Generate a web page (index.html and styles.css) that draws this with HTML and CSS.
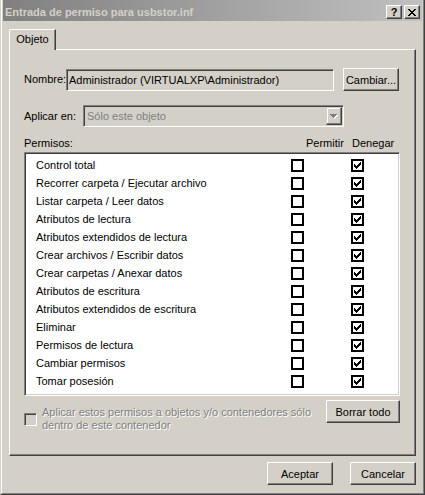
FILE: index.html
```html
<!DOCTYPE html>
<html lang="es">
<head>
<meta charset="utf-8">
<title>Entrada de permiso para usbstor.inf</title>
<link rel="stylesheet" href="styles.css">
</head>
<body>
<div class="window">
  <div class="frame">
    <div class="titlebar">
      <span class="title">Entrada de permiso para usbstor.inf</span>
      <div class="tbtns">
        <span class="tbtn help">?</span>
        <span class="tbtn close">
          <svg width="8" height="7" viewBox="0 0 8 7" shape-rendering="crispEdges"><path fill="#000" d="M0 0h2v1H0z M6 0h2v1H6z M1 1h2v1H1z M5 1h2v1H5z M2 2h4v1H2z M3 3h2v1H3z M2 4h4v1H2z M1 5h2v1H1z M5 5h2v1H5z M0 6h2v1H0z M6 6h2v1H6z"/></svg>
        </span>
      </div>
    </div>
    <div class="content">
      <div class="tabs"><div class="tab">Objeto</div></div>
      <div class="panel">
        <div class="row name-row">
          <span class="lbl lbl-name">Nombre:</span>
          <div class="sunken name-field">Administrador (VIRTUALXP\Administrador)</div>
          <button class="btn cambiar">Cambiar...</button>
        </div>
        <div class="row apply-row">
          <span class="lbl lbl-apply">Aplicar en:</span>
          <div class="sunken combo">
            <span class="combo-text">Sólo este objeto</span>
            <span class="drop">
              <svg width="8" height="5" viewBox="0 0 8 5" shape-rendering="crispEdges"><path fill="#fff" d="M1 1h7v1H1z M2 2h5v1H2z M3 3h3v1H3z M4 4h1v1H4z"/><path fill="#808080" d="M0 0h7v1H0z M1 1h5v1H1z M2 2h3v1H2z M3 3h1v1H3z"/></svg>
            </span>
          </div>
        </div>
        <div class="perm-head">
          <span class="ph-name">Permisos:</span>
          <span class="ph-allow">Permitir</span>
          <span class="ph-deny">Denegar</span>
        </div>
        <div class="sunken list">
          <div class="item"><span class="iname">Control total</span><span class="cb"></span><span class="cb deny"><svg width="7" height="7" viewBox="0 0 7 7" shape-rendering="crispEdges"><path d="M0 2h1v3H0z M1 3h1v3H1z M2 4h1v3H2z M3 3h1v3H3z M4 2h1v3H4z M5 1h1v3H5z M6 0h1v3H6z"/></svg></span></div>
          <div class="item"><span class="iname">Recorrer carpeta / Ejecutar archivo</span><span class="cb"></span><span class="cb deny"><svg width="7" height="7" viewBox="0 0 7 7" shape-rendering="crispEdges"><path d="M0 2h1v3H0z M1 3h1v3H1z M2 4h1v3H2z M3 3h1v3H3z M4 2h1v3H4z M5 1h1v3H5z M6 0h1v3H6z"/></svg></span></div>
          <div class="item"><span class="iname">Listar carpeta / Leer datos</span><span class="cb"></span><span class="cb deny"><svg width="7" height="7" viewBox="0 0 7 7" shape-rendering="crispEdges"><path d="M0 2h1v3H0z M1 3h1v3H1z M2 4h1v3H2z M3 3h1v3H3z M4 2h1v3H4z M5 1h1v3H5z M6 0h1v3H6z"/></svg></span></div>
          <div class="item"><span class="iname">Atributos de lectura</span><span class="cb"></span><span class="cb deny"><svg width="7" height="7" viewBox="0 0 7 7" shape-rendering="crispEdges"><path d="M0 2h1v3H0z M1 3h1v3H1z M2 4h1v3H2z M3 3h1v3H3z M4 2h1v3H4z M5 1h1v3H5z M6 0h1v3H6z"/></svg></span></div>
          <div class="item"><span class="iname">Atributos extendidos de lectura</span><span class="cb"></span><span class="cb deny"><svg width="7" height="7" viewBox="0 0 7 7" shape-rendering="crispEdges"><path d="M0 2h1v3H0z M1 3h1v3H1z M2 4h1v3H2z M3 3h1v3H3z M4 2h1v3H4z M5 1h1v3H5z M6 0h1v3H6z"/></svg></span></div>
          <div class="item"><span class="iname">Crear archivos / Escribir datos</span><span class="cb"></span><span class="cb deny"><svg width="7" height="7" viewBox="0 0 7 7" shape-rendering="crispEdges"><path d="M0 2h1v3H0z M1 3h1v3H1z M2 4h1v3H2z M3 3h1v3H3z M4 2h1v3H4z M5 1h1v3H5z M6 0h1v3H6z"/></svg></span></div>
          <div class="item"><span class="iname">Crear carpetas / Anexar datos</span><span class="cb"></span><span class="cb deny"><svg width="7" height="7" viewBox="0 0 7 7" shape-rendering="crispEdges"><path d="M0 2h1v3H0z M1 3h1v3H1z M2 4h1v3H2z M3 3h1v3H3z M4 2h1v3H4z M5 1h1v3H5z M6 0h1v3H6z"/></svg></span></div>
          <div class="item"><span class="iname">Atributos de escritura</span><span class="cb"></span><span class="cb deny"><svg width="7" height="7" viewBox="0 0 7 7" shape-rendering="crispEdges"><path d="M0 2h1v3H0z M1 3h1v3H1z M2 4h1v3H2z M3 3h1v3H3z M4 2h1v3H4z M5 1h1v3H5z M6 0h1v3H6z"/></svg></span></div>
          <div class="item"><span class="iname">Atributos extendidos de escritura</span><span class="cb"></span><span class="cb deny"><svg width="7" height="7" viewBox="0 0 7 7" shape-rendering="crispEdges"><path d="M0 2h1v3H0z M1 3h1v3H1z M2 4h1v3H2z M3 3h1v3H3z M4 2h1v3H4z M5 1h1v3H5z M6 0h1v3H6z"/></svg></span></div>
          <div class="item"><span class="iname">Eliminar</span><span class="cb"></span><span class="cb deny"><svg width="7" height="7" viewBox="0 0 7 7" shape-rendering="crispEdges"><path d="M0 2h1v3H0z M1 3h1v3H1z M2 4h1v3H2z M3 3h1v3H3z M4 2h1v3H4z M5 1h1v3H5z M6 0h1v3H6z"/></svg></span></div>
          <div class="item"><span class="iname">Permisos de lectura</span><span class="cb"></span><span class="cb deny"><svg width="7" height="7" viewBox="0 0 7 7" shape-rendering="crispEdges"><path d="M0 2h1v3H0z M1 3h1v3H1z M2 4h1v3H2z M3 3h1v3H3z M4 2h1v3H4z M5 1h1v3H5z M6 0h1v3H6z"/></svg></span></div>
          <div class="item"><span class="iname">Cambiar permisos</span><span class="cb"></span><span class="cb deny"><svg width="7" height="7" viewBox="0 0 7 7" shape-rendering="crispEdges"><path d="M0 2h1v3H0z M1 3h1v3H1z M2 4h1v3H2z M3 3h1v3H3z M4 2h1v3H4z M5 1h1v3H5z M6 0h1v3H6z"/></svg></span></div>
          <div class="item"><span class="iname">Tomar posesión</span><span class="cb"></span><span class="cb deny"><svg width="7" height="7" viewBox="0 0 7 7" shape-rendering="crispEdges"><path d="M0 2h1v3H0z M1 3h1v3H1z M2 4h1v3H2z M3 3h1v3H3z M4 2h1v3H4z M5 1h1v3H5z M6 0h1v3H6z"/></svg></span></div>
        </div>
        <div class="bottom-row">
          <div class="chk-wrap">
            <span class="sunken cb3d"></span>
            <span class="dis-text">Aplicar estos permisos a objetos y/o contenedores sólo<br>dentro de este contenedor</span>
          </div>
          <button class="btn borrar">Borrar todo</button>
        </div>
      </div>
      <div class="footer">
        <button class="btn fbtn">Aceptar</button>
        <button class="btn fbtn">Cancelar</button>
      </div>
    </div>
  </div>
</div>
</body>
</html>
```

FILE: styles.css
```css
* { box-sizing: border-box; }
html, body { margin: 0; padding: 0; }
body {
  width: 425px;
  height: 495px;
  overflow: hidden;
  background: #d4d0c8;
  font-family: "Liberation Sans", Arial, sans-serif;
  font-size: 11px;
  color: #000;
}
.window {
  width: 425px;
  height: 495px;
  background: #d4d0c8;
  border-left: 1px solid #d4d0c8;
  border-right: 1px solid #404040;
  border-bottom: 1px solid #404040;
  display: flex;
  flex-direction: column;
}
.frame {
  flex: 1;
  border-left: 1px solid #fff;
  border-right: 1px solid #808080;
  border-bottom: 1px solid #808080;
  padding: 0 1px 1px 1px;
  display: flex;
  flex-direction: column;
}
.titlebar {
  height: 21px;
  padding: 3px 2px 0 2px;
  display: flex;
  align-items: center;
  background: linear-gradient(90deg, #808080, #c0c0c0);
}
.title {
  font-weight: bold;
  color: #d4d0c8;
  white-space: nowrap;
}
.tbtns {
  margin-left: auto;
  display: flex;
  gap: 2px;
}
.tbtn {
  width: 16px;
  height: 14px;
  background: #d4d0c8;
  border: 1px solid;
  border-color: #fff #404040 #404040 #fff;
  box-shadow: inset -1px -1px #808080, inset 1px 1px #d4d0c8;
  display: flex;
  align-items: center;
  justify-content: center;
}
.help {
  font-weight: bold;
  font-size: 11px;
  line-height: 12px;
}
.content {
  padding: 8px 6px 0 6px;
}
.tabs {
  display: flex;
}
.tab {
  width: 47px;
  height: 21px;
  margin-bottom: -1px;
  position: relative;
  z-index: 1;
  background: #d4d0c8;
  border-left: 1px solid #fff;
  border-top: 1px solid #fff;
  border-right: 1px solid #404040;
  border-top-left-radius: 2px;
  box-shadow: inset -1px 0 #808080;
  text-align: center;
  line-height: 19px;
}
.panel {
  height: 407px;
  border-left: 1px solid #fff;
  border-top: 1px solid #fff;
  border-right: 1px solid #404040;
  border-bottom: 1px solid #404040;
  box-shadow: inset -1px -1px #808080;
  padding: 18px 0 0 14px;
}
.sunken {
  border: 1px solid;
  border-color: #808080 #fff #fff #808080;
  box-shadow: inset 1px 1px #404040, inset -1px -1px #d4d0c8;
}
.btn {
  font: inherit;
  color: #000;
  background: #d4d0c8;
  border: 1px solid;
  border-color: #fff #404040 #404040 #fff;
  box-shadow: inset -1px -1px #808080, inset 1px 1px #d4d0c8;
  padding: 0;
  height: 23px;
}
.row {
  display: flex;
  align-items: flex-start;
}
.lbl { white-space: nowrap; }
.lbl-name { width: 42px; line-height: 23px; }
.name-field {
  width: 268px;
  height: 22px;
  margin-top: 1px;
  padding-left: 2px;
  line-height: 20px;
  white-space: nowrap;
}
.cambiar {
  width: 56px;
  margin-left: 9px;
}
.apply-row {
  margin-top: 14px;
}
.lbl-apply { width: 59px; line-height: 22px; }
.combo {
  width: 261px;
  height: 22px;
  display: flex;
  align-items: center;
  padding-left: 3px;
}
.combo-text {
  color: #808080;
  flex: 1;
  white-space: nowrap;
}
.drop {
  width: 16px;
  height: 18px;
  margin-right: 1px;
  background: #d4d0c8;
  border: 1px solid;
  border-color: #d4d0c8 #404040 #404040 #d4d0c8;
  box-shadow: inset -1px -1px #808080, inset 1px 1px #fff;
  display: flex;
  align-items: center;
  justify-content: center;
  padding-top: 1px;
}
.perm-head {
  margin-top: 10px;
  display: flex;
  line-height: 13px;
  white-space: nowrap;
}
.ph-name { width: 282px; }
.ph-allow { width: 46px; }
.list {
  margin-top: 2px;
  width: 376px;
  height: 244px;
  background: #fff;
  padding: 3px 0 0 11px;
}
.item {
  height: 18px;
  display: flex;
  align-items: center;
}
.iname {
  width: 255px;
  white-space: nowrap;
}
.cb {
  width: 13px;
  height: 13px;
  border: 2px solid #000;
  background: #fff;
  display: flex;
  align-items: center;
  justify-content: center;
}
.cb.deny { margin-left: 47px; }
.bottom-row {
  width: 376px;
  margin-top: 4px;
  display: flex;
  align-items: flex-start;
}
.chk-wrap {
  margin-top: 6px;
  height: 26px;
  display: flex;
  align-items: center;
  flex: 1;
}
.cb3d {
  width: 13px;
  height: 13px;
  background: #d4d0c8;
  flex: none;
}
.dis-text {
  margin-left: 5px;
  line-height: 13px;
  color: #808080;
  text-shadow: 1px 1px 0 #fff;
  white-space: nowrap;
}
.borrar {
  width: 74px;
  flex: none;
}
.footer {
  margin-top: 6px;
  display: flex;
  justify-content: flex-end;
  gap: 17px;
}
.fbtn { width: 66px; }
```
